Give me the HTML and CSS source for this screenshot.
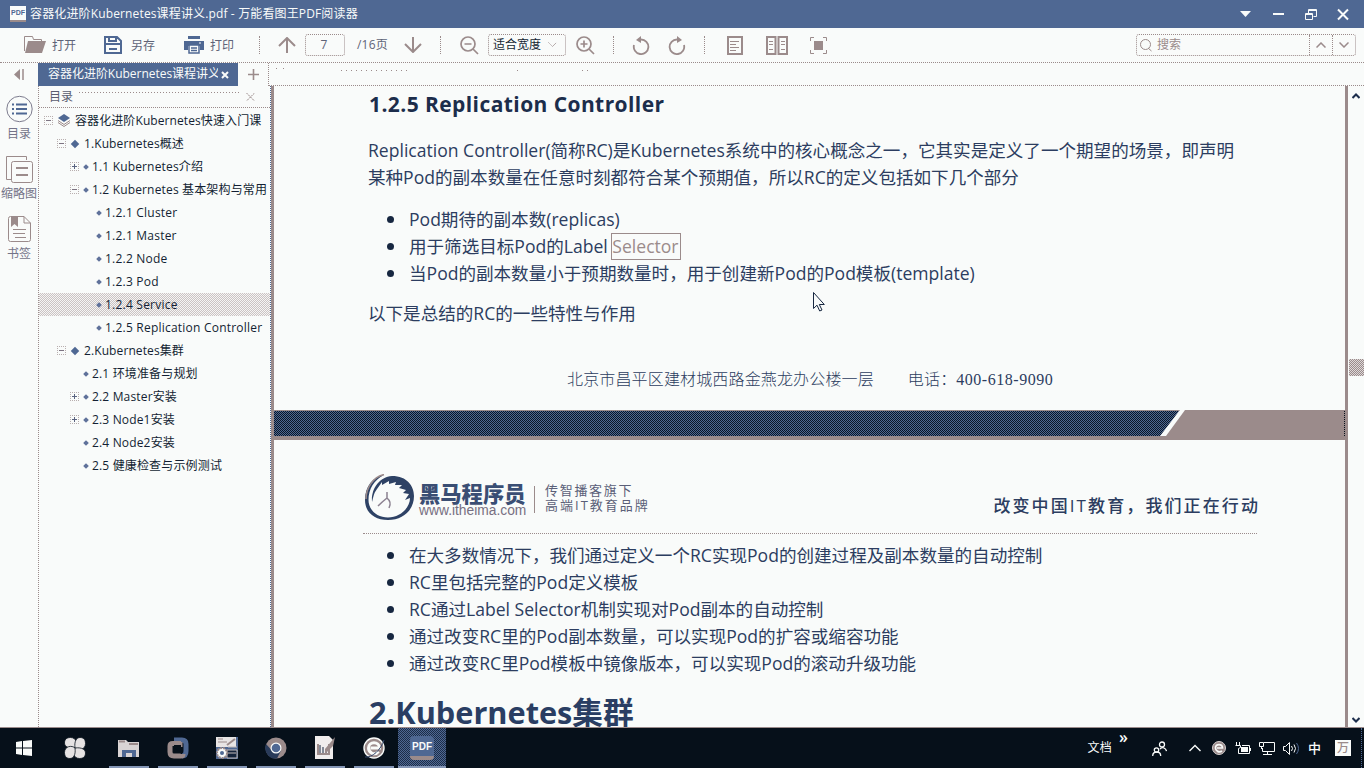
FILE: index.html
```html
<!DOCTYPE html>
<html lang="zh-CN">
<head>
<meta charset="utf-8">
<title>容器化进阶Kubernetes课程讲义.pdf - 万能看图王PDF阅读器</title>
<link rel="stylesheet" href="styles.css">
</head>
<body>
<div class="app">
  <header class="titlebar">
    <span class="appicon">PDF</span>
    <span class="title">容器化进阶Kubernetes课程讲义.pdf - 万能看图王PDF阅读器</span>
    <svg class="winbtns" width="124" height="28" viewBox="0 0 124 28" fill="none" stroke="#f9fbfa">
      <path d="M0 11h11l-5.500 6z" fill="#f9fbfa" stroke="none"/>
      <path d="M33 14h11" stroke-width="2"/>
      <path d="M65.500 13.500h7v6h-7zM65 14.500h8M68.500 13v-3.500h8v7h-3M68 10.500h8"/>
      <path d="M98 9.500l10 10M108 9.500l-10 10" stroke-width="2"/>
    </svg>
  </header>

  <div class="toolbar">
    <svg class="i-open" width="22" height="18" viewBox="0 0 22 18"><path d="M.5 15V.5h8l1 3h8V5" fill="none" stroke="#9b8b8b"/><path d="M4 5h18l-4 12H1z" fill="#9b8b8b"/></svg>
    <span class="tb-text t-open">打开</span>
    <svg class="i-save" width="18" height="18" viewBox="0 0 18 18" fill="none" stroke="#4f6893" stroke-width="2"><path d="M1 1h12l4 4v12H1zM1 8h16M5 1v4h7V1M5 13h8"/></svg>
    <span class="tb-text t-save">另存</span>
    <svg class="i-print" width="20" height="18" viewBox="0 0 20 18"><path d="M4 0h12v3H4zM0 5h20v9h-4v-4H4v4H0z" fill="#4f6893"/><path d="M5 9h10v8H5zM7 12h6M7 14.500h6" fill="#f9fbfa" stroke="#4f6893" stroke-width="1.500"/><path d="M15 7h2" stroke="#f9fbfa"/></svg>
    <span class="tb-text t-print">打印</span>
    <i class="sep s1"></i>
    <svg class="i-up" width="18" height="16" viewBox="0 0 18 16" fill="none" stroke="#9b8b8b" stroke-width="2"><path d="M9 16V1M1 9l8-8 8 8"/></svg>
    <span class="pagebox">7</span>
    <span class="pages">/16页</span>
    <svg class="i-down" width="18" height="16" viewBox="0 0 18 16" fill="none" stroke="#9b8b8b" stroke-width="2"><path d="M9 0v15M1 7l8 8 8-8"/></svg>
    <i class="sep s2"></i>
    <svg class="i-zo" width="19" height="19" viewBox="0 0 19 19" fill="none" stroke="#9b8b8b" stroke-width="1.700"><circle cx="8" cy="8" r="7"/><path d="M4.500 8h7M13 13l5 5"/></svg>
    <span class="zoombox">适合宽度<svg width="9" height="6" viewBox="0 0 9 6" fill="none" stroke="#9b8b8b" stroke-dasharray="1 .6"><path d="M.5.500l4 4 4-4"/></svg></span>
    <svg class="i-zi" width="19" height="19" viewBox="0 0 19 19" fill="none" stroke="#9b8b8b" stroke-width="1.700"><circle cx="8" cy="8" r="7"/><path d="M4.500 8h7M8 4.500v7M13 13l5 5"/></svg>
    <i class="sep s3"></i>
    <svg class="i-rl" width="18" height="19" viewBox="0 0 18 19"><path d="M2 9a7.300 7.300 0 1 0 7-5.500" fill="none" stroke="#9b8b8b" stroke-width="1.800"/><path d="M9 0v7L4 4z" fill="#9b8b8b"/></svg>
    <svg class="i-rr" width="18" height="19" viewBox="0 0 18 19"><path d="M16 9a7.300 7.300 0 1 1-7-5.500" fill="none" stroke="#9b8b8b" stroke-width="1.800"/><path d="M9 0v7l5-3z" fill="#9b8b8b"/></svg>
    <i class="sep s4"></i>
    <svg class="i-p1" width="16" height="19" viewBox="0 0 16 19" fill="none" stroke="#9b8b8b"><path d="M1 1h14v17H1z" stroke-width="2"/><path d="M3 5.500h9M3 8.500h6M3 11.500h9M3 14.500h6"/></svg>
    <svg class="i-p2" width="22" height="19" viewBox="0 0 22 19" fill="none" stroke="#9b8b8b"><path d="M1 1h8.500v17H1zM12.500 1H21v17h-8.500z" stroke-width="2"/><path d="M3 5.500h4M3 8.500h4M3 13.500h4M15 5.500h4M15 8.500h4M15 13.500h4"/></svg>
    <svg class="i-fs" width="17" height="17" viewBox="0 0 17 17" fill="none" stroke="#9b8b8b"><path d="M.5 4V.5H4M13 .5h3.500V4M16.500 13v3.500H13M4 16.500H.5V13"/><path d="M4 4h9v9H4z" fill="#9b8b8b" stroke="none"/></svg>
    <div class="search">
      <svg width="12" height="13" viewBox="0 0 12 13" fill="none" stroke="#9b8b8b"><circle cx="5.500" cy="5.500" r="5"/><path d="M8 9l3.500 3"/></svg>
      <span class="s-text">搜索</span>
      <span class="s-btn"><svg width="10" height="6" viewBox="0 0 10 6"><path d="M.5 5.500L5 1l4.500 4.500" fill="none" stroke="#9b8b8b" stroke-width="1.500"/></svg></span>
      <span class="s-btn"><svg width="10" height="6" viewBox="0 0 10 6"><path d="M.5.500L5 5 9.500.500" fill="none" stroke="#9b8b8b" stroke-width="1.500"/></svg></span>
    </div>
  </div>

  <div class="tabs">
    <span class="collapse"><svg width="10" height="11" viewBox="0 0 10 11"><path d="M6 0v11L0 5.500z" fill="#9b8b8b"/><path d="M9 0v11" stroke="#9b8b8b" stroke-width="1.500"/></svg></span>
    <span class="tab"><span class="tab-text">容器化进阶Kubernetes课程讲义</span><svg width="8" height="8" viewBox="0 0 8 8" stroke="#f9fbfa" stroke-width="2"><path d="M1 1l6 6M7 1L1 7"/></svg></span>
    <span class="newtab"><svg width="11" height="11" viewBox="0 0 11 11" stroke="#9b8b8b" stroke-width="1.600"><path d="M5.500 0v11M0 5.500h11"/></svg></span>
    <span class="tabrest"><svg width="330" height="12" viewBox="0 0 330 12" stroke="#9b8b8b"><path d="M7 5.500h8" stroke-dasharray="1 6"/><path d="M72 7.500h66" stroke-dasharray="1 4"/><path d="M248 7.500h1M313 7.500h1M318 7.500h1"/></svg></span>
  </div>

  <div class="main">
    <nav class="rail">
      <div class="rail-item">
        <svg width="27" height="28" viewBox="0 0 27 28" fill="none" stroke="#4f6893"><circle cx="13.500" cy="14" r="12.700" stroke="#7d7c8e"/><path d="M10 9.500h11M10 14h11M10 18.500h11" stroke-width="1.800"/><path d="M6 9.500h2M6 14h2M6 18.500h2" stroke-width="1.800"/></svg>
        <span>目录</span>
      </div>
      <div class="rail-item">
        <svg width="27" height="28" viewBox="0 0 27 28" fill="none" stroke="#9b8b8b"><path d="M5 24.500H.5v-23h20V5"/><rect x="5.500" y="6.500" width="21" height="21" rx="2"/><path d="M10 13h12M10 20h12" stroke-width="1.800"/></svg>
        <span>缩略图</span>
      </div>
      <div class="rail-item">
        <svg width="23" height="28" viewBox="0 0 23 28" fill="none" stroke="#9b8b8b"><path d="M16 1.500H2.500q-2 0-2 2v21q0 2 2 2h18q2 0 2-2V8zM16 1.500V8h6.500M5 14.500h13M5 18.500h12M7 22.500h11"/><path d="M3 1h7v11l-3.500-3L3 12z" fill="#9b8b8b" stroke="none"/></svg>
        <span>书签</span>
      </div>
    </nav>

    <aside class="outline">
      <div class="outline-head"><span>目录</span><svg class="headdots" width="160" height="3" viewBox="0 0 160 3" stroke="#9b8b8b"><path d="M0 .5h160" stroke-dasharray="1 2"/></svg><svg width="9" height="8" viewBox="0 0 9 8" stroke="#9b8b8b"><path d="M.5 0l8 8M8.500 0l-8 8" stroke-dasharray="2 .7"/></svg></div>
      <div class="tree">
        <div class="row l0"><i class="box minus"></i><svg class="book" width="12" height="13" viewBox="0 0 12 13"><path d="M6 0l6 4-6 4-6-4z" fill="#4f6893"/><path d="M0 6.500l6 4 6-4M0 8.500l6 4 6-4" fill="none" stroke="#9b8b8b"/></svg><span>容器化进阶Kubernetes快速入门课</span></div>
        <div class="row l1"><i class="box minus"></i><i class="dia big"></i><span>1.Kubernetes概述</span></div>
        <div class="row l2"><i class="box plus"></i><i class="dia"></i><span>1.1 Kubernetes介绍</span></div>
        <div class="row l2"><i class="box minus"></i><i class="dia"></i><span>1.2 Kubernetes 基本架构与常用</span></div>
        <div class="row l3"><i class="dia"></i><span>1.2.1 Cluster</span></div>
        <div class="row l3"><i class="dia"></i><span>1.2.1 Master</span></div>
        <div class="row l3"><i class="dia"></i><span>1.2.2 Node</span></div>
        <div class="row l3"><i class="dia"></i><span>1.2.3 Pod</span></div>
        <div class="row l3 selected"><i class="dia"></i><span>1.2.4 Service</span></div>
        <div class="row l3"><i class="dia"></i><span>1.2.5 Replication Controller</span></div>
        <div class="row l1"><i class="box minus"></i><i class="dia big"></i><span>2.Kubernetes集群</span></div>
        <div class="row l2"><i class="box none"></i><i class="dia"></i><span>2.1 环境准备与规划</span></div>
        <div class="row l2"><i class="box plus"></i><i class="dia"></i><span>2.2 Master安装</span></div>
        <div class="row l2"><i class="box plus"></i><i class="dia"></i><span>2.3 Node1安装</span></div>
        <div class="row l2"><i class="box none"></i><i class="dia"></i><span>2.4 Node2安装</span></div>
        <div class="row l2"><i class="box none"></i><i class="dia"></i><span>2.5 健康检查与示例测试</span></div>
      </div>
    </aside>

    <main class="doc">
      <h3>1.2.5 Replication Controller</h3>
      <p class="para"><span>Replication Controller(简称RC)是Kubernetes系统中的核心概念之一，它其实是定义了一个期望的场景，即声明</span><br><span>某种Pod的副本数量在任意时刻都符合某个预期值，所以RC的定义包括如下几个部分</span></p>
      <ul>
        <li>Pod期待的副本数(replicas)</li>
        <li>用于筛选目标Pod的Label <span class="hit">Selector</span></li>
        <li>当Pod的副本数量小于预期数量时，用于创建新Pod的Pod模板(template)</li>
      </ul>
      <p class="after">以下是总结的RC的一些特性与作用</p>
      <p class="address"><span>北京市昌平区建材城西路金燕龙办公楼一层</span><span>电话：<span class="tel">400-618-9090</span></span></p>
      <div class="band">
        <svg width="1072" height="30" viewBox="0 0 1072 30">
          <defs><pattern id="weave" width="4" height="4" patternUnits="userSpaceOnUse"><path d="M0 0h4v4H0z" fill="#4f6893"/><path d="M0 0h1v1H0zM2 0h1v1H2zM1 1h1v1H1zM3 1h1v1H3zM0 2h1v1H0zM2 2h1v1H2zM1 3h1v1H1zM3 3h1v1H3z" fill="#0a1626"/></pattern></defs>
          <path d="M0 0h1072v30H0z" fill="#9b8b8b"/>
          <path d="M0 1h905l-18 25H0z" fill="url(#weave)"/>
          <path d="M906 0h5l-19 26h-6z" fill="#f9fbfa"/>
          <path d="M1070.500 1v25" stroke="#06101a" stroke-dasharray="1 1"/>
        </svg>
      </div>
      <div class="pagehead">
        <svg class="horse" width="52" height="48" viewBox="0 0 52 48">
          <path d="M28 2C43 2 50 12 50 22C50 36 39 46 24 46C10 46 1 38 1 26C1 12 9 3 20 1C10 6 4.500 15 4.500 26C4.500 36 13 43.500 24 43.500C36 43.500 46 34 46 24L41 26L45 20L39 19L42 16L35 14L38 11L31 11L32 8L25 10L25 7L18 11L18 8L13 15C9 20 9 26 8 28C7 15 15 3 28 2Z" fill="#2e4265"/>
          <path d="M20 .5C9 3 2 14 2 25" fill="none" stroke="#9b8b8b" stroke-width="1.500"/>
          <path d="M14 32q4-4 9-8v-6M23 24q5 4 2 10" fill="none" stroke="#8b8190" stroke-width="1.500"/>
        </svg>
        <div class="brand"><b>黑马程序员</b><span>www.itheima.com</span></div>
        <i class="rule"></i>
        <div class="tag"><span>传智播客旗下</span><span class="t2">高端IT教育品牌</span></div>
        <div class="slogan">改变中国IT教育，我们正在行动</div>
      </div>
      <ul class="second">
        <li>在大多数情况下，我们通过定义一个RC实现Pod的创建过程及副本数量的自动控制</li>
        <li>RC里包括完整的Pod定义模板</li>
        <li>RC通过Label Selector机制实现对Pod副本的自动控制</li>
        <li>通过改变RC里的Pod副本数量，可以实现Pod的扩容或缩容功能</li>
        <li>通过改变RC里Pod模板中镜像版本，可以实现Pod的滚动升级功能</li>
      </ul>
      <h2>2.Kubernetes集群</h2>
      <svg class="cursor" width="12" height="20" viewBox="0 0 12 20"><path d="M.5.500v16l3.500-3.300 2.700 5.800 2.300-1-2.700-5.500h5z" fill="#f9fbfa" stroke="#172740"/></svg>
    </main>

    <div class="scrollbar">
      <svg width="8" height="6" viewBox="0 0 8 6"><path d="M.5 5L4 1.500 7.500 5" fill="none" stroke="#1d2e4c" stroke-width="2"/></svg>
      <i class="thumb"></i>
      <svg width="8" height="6" viewBox="0 0 8 6"><path d="M.5 1L4 4.500 7.500 1" fill="none" stroke="#1d2e4c" stroke-width="2"/></svg>
    </div>
  </div>

  <footer class="taskbar">
    <div class="apps">
      <span class="app-btn"><svg width="16" height="16" viewBox="0 0 16 16" fill="#f9fbfa"><path d="M0 2l6-1v6.500H0zM7 1l9-1v7.500H7zM0 8.500h6V15l-6-1zM7 8.500h9V16l-9-1z"/></svg></span>
      <span class="app-btn"><svg width="22" height="22" viewBox="0 0 22 22" fill="#e6e3e3" stroke="#06101a" stroke-width=".8"><path d="M11 11C14 8 13 .5 6.500.500C2 .5.500 3 .5 6s3 6 10.500 5z"/><path d="M11 11C14 14 21.500 13 21.500 6.500C21.500 2 19 .5 16 .5s-6 3-5 10.500z"/><path d="M11 11C8 14 9 21.500 15.500 21.500C20 21.500 21.500 19 21.500 16s-3-6-10.500-5z"/><path d="M11 11C8 8 .5 9 .5 15.500C.5 20 3 21.500 6 21.500s6-3 5-10.500z"/></svg></span>
      <span class="app-btn open"><svg width="22" height="19" viewBox="0 0 22 19"><path d="M0 1h8l2 2h11v15H0z" fill="#d9d4d4"/><path d="M1 2.500h6M11 5h9" stroke="#9b8b8b" stroke-width="2"/><path d="M4 18v-7h14v7h-4v-4H8v4z" fill="#4f6893"/></svg></span>
      <span class="app-btn open"><svg width="22" height="22" viewBox="0 0 22 22" fill="none"><path d="M7 3h8q4 0 4 4v7q0 5-4 5" stroke="#4f6893" stroke-width="5"/><path d="M14 6.500H6Q3 6.500 3 9v6q0 4 4 4h7q2 0 2-2" stroke="#9b8b8b" stroke-width="5"/><path d="M14 5v5" stroke="#9b8b8b" stroke-width="3"/><path d="M7 8h7v7L7 11z" fill="#06101a"/></svg></span>
      <span class="app-btn open"><svg width="24" height="24" viewBox="0 0 24 24"><path d="M1 1h22v22H1z" fill="#4f6893"/><path d="M1 1h20v10H1z" fill="#e8e5e5"/><path d="M3 3h5M3 6h9" stroke="#9b8b8b"/><path d="M12 9l8-6" stroke="#9b8b8b" stroke-width="2"/><path d="M13 11h9M12 14h10v8H12zM13 17h8" stroke="#c3bbbb" fill="#14243c"/><circle cx="7" cy="17" r="5" fill="#f9fbfa" stroke="#9b8b8b" stroke-width="2" stroke-dasharray="2 1"/><circle cx="7" cy="17" r="2" fill="#4f6893"/></svg></span>
      <span class="app-btn open"><svg width="22" height="22" viewBox="0 0 22 22"><circle cx="11" cy="11" r="10.500" fill="#9b8b8b"/><path d="M1 7a10.500 10.500 0 0 0 11 14.500l4-8-5 2-5-3z" fill="#293b5a"/><circle cx="11" cy="11" r="5.500" fill="#f9fbfa"/><circle cx="11" cy="11" r="4.300" fill="#4f6893"/></svg></span>
      <span class="app-btn open"><svg width="24" height="24" viewBox="0 0 24 24"><path d="M2 0h14l4 4v19H2z" fill="#f0eded"/><path d="M5 8v10h11V8" fill="none" stroke="#9b8b8b" stroke-width="2"/><path d="M7 9v8M10 11v6M13 13v4" stroke="#172740"/><path d="M22 1L12 13v5l8-8z" fill="#9b8b8b"/></svg></span>
      <span class="app-btn open"><svg width="22" height="22" viewBox="0 0 22 22"><circle cx="11" cy="11" r="10" fill="#9b8b8b" stroke="#f9fbfa" stroke-width="1.400"/><path d="M15.500 14.500C12 19 5.500 16 5.500 11c0-7 11-7 11 0h-9" fill="none" stroke="#f9fbfa" stroke-width="3"/><path d="M2 20C9 21 18 13 21 3" stroke="#31456a" fill="none"/></svg></span>
      <span class="app-btn open active"><span class="pdf">PDF</span></span>
    </div>
    <div class="tray">
      <span class="docs">文档</span><span class="more">»</span>
      <svg class="people" width="15" height="15" viewBox="0 0 15 15" fill="none" stroke="#f9fbfa" stroke-width="1.300"><circle cx="10" cy="3.500" r="2.500"/><circle cx="4.500" cy="9" r="2.200"/><path d="M.7 15q0-4 4-4t4 4M8 8q2-2 4-1t2.500 3"/></svg>
      <svg class="chev" width="12" height="8" viewBox="0 0 12 8"><path d="M.5 7L6 1.500 11.500 7" fill="none" stroke="#f9fbfa" stroke-width="1.400"/></svg>
      <svg class="tray-e" width="14" height="14" viewBox="0 0 14 14"><circle cx="7" cy="7" r="6.500" fill="#9b8b8b" stroke="#d5cfcf"/><path d="M10 10C7 12 3.500 10 3.500 7c0-4.500 7-4.500 7 0H5" fill="none" stroke="#f9fbfa" stroke-width="1.700"/></svg>
      <svg class="bat" width="16" height="12" viewBox="0 0 16 12" fill="none" stroke="#f9fbfa"><path d="M1.500 0v3M4.500 0v3M.5 3.500h5v2l-2 1v5h11v-8H7M15.500 6v3"/><path d="M6 5h7v5H6z" fill="#f9fbfa" stroke="none"/></svg>
      <svg class="net" width="16" height="13" viewBox="0 0 16 13" fill="none" stroke="#f9fbfa"><path d="M5 .5h10.500v9H3.500V6M8.500 10v2.500M4 12.500h9M.5.500h4v4h-4zM2.500 4v3"/></svg>
      <svg class="vol" width="17" height="13" viewBox="0 0 17 13" fill="none" stroke="#f9fbfa"><path d="M.5 4.500h2l4-4v12l-4-4h-2zM8.500 4q2 2.500 0 5M11 2.500q3 4 0 8"/><path d="M13.500 1q4 5.500 0 11" stroke="#4f6893"/></svg>
      <span class="ime">中</span>
      <span class="wan">万</span>
      <i class="peek"></i>
    </div>
  </footer>
</div>
</body>
</html>
```
FILE: styles.css
```css
* { box-sizing: border-box; }
body {
  margin: 0;
  width: 1364px;
  height: 768px;
  overflow: hidden;
  background: #f9fbfa;
  color: #131f33;
  font: 12px/16px "Open Sans", "Noto Sans CJK SC", sans-serif;
}
svg { display: block; flex: none; }
p, h2, h3, ul { margin: 0; padding: 0; }
i { display: block; flex: none; }
.app { display: flex; flex-direction: column; height: 768px; }

.titlebar {
  height: 28px;
  flex: none;
  display: flex;
  align-items: center;
  background: #4f6893;
  color: #f9fbfa;
  padding-left: 10px;
}
.appicon {
  width: 16px;
  height: 16px;
  background: #f9fbfa;
  color: #4f6893;
  border-bottom: 2px solid #9b8b8b;
  font: bold 7px/13px "Liberation Sans", sans-serif;
  text-align: center;
  margin-right: 4px;
}
.title { font-size: 12px; letter-spacing: .14px; white-space: nowrap; }
.winbtns { margin-left: auto; }

.toolbar {
  height: 35px;
  flex: none;
  display: flex;
  align-items: center;
  border-bottom: 1px dotted #9b8b8b;
  padding-left: 24px;
  color: #5f6478;
}
.tb-text { width: 26px; font-size: 12px; padding-top: 1px; white-space: nowrap; }
.t-open { margin-left: 6px; }
.i-save { margin-left: 26px; }
.t-save { margin-left: 9px; width: 25px; }
.i-print { margin-left: 28px; }
.t-print { margin-left: 6px; }
.sep { width: 1px; height: 18px; border-left: 1px dotted #9b8b8b; }
.s1 { margin-left: 23px; }
.i-up { margin-left: 18px; }
.pagebox {
  width: 40px;
  height: 22px;
  margin-left: 9px;
  border: 1px dotted #9b8b8b;
  border-radius: 3px;
  text-align: center;
  line-height: 20px;
  padding-right: 2px;
}
.pages { margin-left: 12px; width: 36px; white-space: nowrap; letter-spacing: .2px; }
.i-down { margin-left: 11px; }
.s2 { margin-left: 18px; }
.i-zo { margin-left: 19px; }
.zoombox {
  width: 78px;
  height: 22px;
  margin-left: 9px;
  border: 1px dotted #9b8b8b;
  border-radius: 3px;
  display: flex;
  align-items: center;
  gap: 7px;
  padding-left: 4px;
  color: #131f33;
}
.i-zi { margin-left: 10px; }
.s3 { margin-left: 18px; }
.i-rl { margin-left: 18px; }
.i-rr { margin-left: 18px; }
.s4 { margin-left: 18px; }
.i-p1 { margin-left: 22px; }
.i-p2 { margin-left: 23px; }
.i-fs { margin-left: 22px; }
.search {
  margin-left: auto;
  margin-right: 8px;
  width: 220px;
  height: 22px;
  border: 1px dotted #9b8b8b;
  border-radius: 3px;
  display: flex;
  align-items: center;
  padding-left: 3px;
  color: #9b8b8b;
}
.s-text { margin-left: 5px; flex: 1; }
.s-btn {
  width: 23px;
  height: 20px;
  border-left: 1px dotted #9b8b8b;
  display: flex;
  align-items: center;
  justify-content: center;
}

.tabs { height: 23px; flex: none; display: flex; align-items: stretch; }
.collapse { width: 38px; display: flex; align-items: center; padding-left: 14px; }
.tab {
  width: 200px;
  background: #4f6893;
  color: #f9fbfa;
  display: flex;
  align-items: center;
  padding-left: 10px;
}
.tab-text { width: 170px; overflow: hidden; white-space: nowrap; margin-right: 3px; padding-bottom: 1px; letter-spacing: -.03px; }
.newtab {
  width: 31px;
  display: flex;
  align-items: center;
  justify-content: center;
  border-right: 1px dotted #9b8b8b;
}
.tabrest { flex: 1; border-bottom: 1px dotted #9b8b8b; }

.main { height: 642px; flex: none; display: flex; border-bottom: 1px solid #9b8b8b; }
.rail {
  width: 39px;
  border-right: 1px dotted #9b8b8b;
  display: flex;
  flex-direction: column;
  gap: 11px;
  padding-top: 9px;
  color: #747388;
}
.rail-item { height: 49px; display: flex; flex-direction: column; align-items: center; gap: 3px; white-space: nowrap; }
.outline { width: 232px; border-right: 1px dotted #4f6893; overflow: hidden; }
.outline-head {
  height: 22px;
  border-bottom: 1px dotted #9b8b8b;
  display: flex;
  align-items: center;
  padding: 0 15px 0 10px;
  color: #5a5d70;
}
.outline-head svg:last-child { margin-left: auto; }
.headdots { align-self: flex-start; margin: 6px 0 0 6px; }
.tree { padding-top: 1px; letter-spacing: .16px; }
.row { height: 23px; display: flex; align-items: center; white-space: nowrap; }
.row span { margin-left: 4px; }
.l0 { padding-left: 5px; letter-spacing: .09px; }
.l1 { padding-left: 18px; letter-spacing: .1px; }
.l2 { padding-left: 31px; }
.l3 { padding-left: 56px; letter-spacing: .22px; }
.l0 .book { margin-left: 5px; }
.l0 span, .l1 span { margin-left: 5px; }
.selected { background: repeating-conic-gradient(#cbc3c3 0 25%, #f5f5f4 0 50%) 0 0 / 2px 2px; }
.box {
  width: 9px;
  height: 9px;
  border: 1px dotted #b9afaf;
  background: linear-gradient(#7d7482, #7d7482) center / 5px 1px no-repeat;
}
.plus {
  background:
    linear-gradient(#5a6380, #5a6380) center / 5px 1px no-repeat,
    linear-gradient(#5a6380, #5a6380) center / 1px 5px no-repeat;
}
.none { visibility: hidden; }
.dia { width: 4px; height: 4px; margin-left: 5px; background: #5f719a; transform: rotate(45deg); }
.big { width: 6px; height: 6px; margin-left: 6px; margin-right: 1px; background: #4f6893; }
.l3 .dia { margin-left: 2px; }

.doc {
  position: relative;
  width: 1077px;
  border-left: 3px solid #9b8b8b;
  border-right: 3px solid #9b8b8b;
  overflow: hidden;
  color: #2c3d60;
  font-size: 17.57px;
  line-height: 27px;
  white-space: nowrap;
}
h3 { font-size: 21px; line-height: 36px; font-weight: 700; letter-spacing: .42px; padding-left: 95px; color: #1c2d4b; }
.para { margin-top: 15px; padding-left: 94px; }
.doc ul { list-style: none; margin-top: 15px; padding-left: 113px; }
.doc li { display: flex; align-items: center; height: 27px; white-space: pre; }
.doc li::before { content: ""; width: 7px; height: 7px; border-radius: 50%; background: #172740; margin-right: 15px; }
.hit { border: 1px solid #9b8b8b; color: #9b8b8b; height: 27px; line-height: 24px; margin-left: -1px; padding: 0 1px 0 0; }
.after { margin-top: 13px; padding-left: 94px; }
.address {
  margin-top: 43px;
  padding-left: 293px;
  height: 20px;
  line-height: 20px;
  font-size: 16px;
  letter-spacing: .15px;
  display: flex;
  gap: 34px;
  font-weight: 300;
  font-family: "Liberation Serif", "Noto Sans CJK SC", serif;
}
.tel { font-weight: 400; letter-spacing: .52px; }
.band { margin-top: 20px; height: 30px; }
.pagehead {
  height: 94px;
  margin: 0 88px 0 89px;
  border-bottom: 1px dotted #9b8b8b;
  display: flex;
  padding: 33px 0 0 1px;
}
.horse { margin-top: 1px; }
.brand { width: 108px; margin: 9px 0 0 3px; display: flex; flex-direction: column; }
.brand b { font: 900 21.3px/21px "Noto Sans CJK SC", sans-serif; height: 20px; color: #3a4e74; }
.brand span { font: 13.8px/17px "Liberation Sans", sans-serif; color: #776f81; }
.rule { width: 1px; height: 27px; margin: 13px 0 0 7px; background: #9b8b8b; }
.tag { margin: 10px 0 0 10px; font-size: 13px; line-height: 15px; letter-spacing: 1.7px; display: flex; flex-direction: column; color: #5b5f78; }
.tag .t2 { letter-spacing: 2px; }
.slogan { margin: 19px -3px 0 auto; font-size: 17px; font-weight: 500; letter-spacing: 2.1px; }
.doc ul.second { margin-top: 8px; }
h2 { margin-top: 14px; padding-left: 95px; font-size: 30.7px; line-height: 42px; font-weight: 700; color: #2a3e63; }
.cursor { position: absolute; left: 539px; top: 206px; }

.scrollbar { flex: 1; display: flex; flex-direction: column; align-items: center; padding: 7px 0 4px; }
.thumb { width: 15px; height: 17px; margin: 260px 0 auto; background: repeating-conic-gradient(#9b8b8b 0 25%, #ddd8d8 0 50%) 0 0 / 2px 2px; }

.taskbar { height: 40px; flex: none; display: flex; background: #06101a; color: #f9fbfa; }
.apps { display: flex; }
.app-btn { width: 49px; height: 40px; display: flex; align-items: center; justify-content: center; position: relative; }
.app-btn:first-child { width: 48px; }
.app-btn:nth-child(2) { width: 53px; margin-right: 3px; }
.open::after { content: ""; position: absolute; left: 5px; right: 4px; bottom: 0; height: 2px; background: #8496b6; }
.app-btn.active { background: repeating-conic-gradient(#4f6893 0 25%, #1c2d48 0 50%) 0 0 / 2px 2px; margin-left: 1px; width: 48px; margin-left: 0; }
.active::after { left: 0; right: 0; }
.pdf { width: 24px; height: 24px; border-radius: 4px; background: #4f6893; border-bottom: 4px solid #9b8b8b; font: bold 10px/22px "Liberation Sans", sans-serif; text-align: center; }
.tray { margin-left: auto; display: flex; align-items: center; }
.docs { font-size: 12px; letter-spacing: .3px; }
.more { font-size: 16px; font-weight: 600; margin: -23px 0 0 7px; width: 10px; }
.people { margin-left: 23px; }
.chev { margin-left: 22px; }
.tray-e { margin-left: 11px; }
.bat { margin-left: 9px; }
.net { margin-left: 8px; }
.vol { margin-left: 8px; }
.ime { margin-left: 8px; font-size: 13px; font-weight: 500; }
.wan { margin-left: 14px; width: 16px; height: 16px; background: #f9fbfa; color: #9b8b8b; font-size: 12px; line-height: 15px; text-align: center; font-weight: 500; }
.peek { width: 3px; height: 40px; margin-left: 10px; border-left: 1px dotted #4f6893; }
```
